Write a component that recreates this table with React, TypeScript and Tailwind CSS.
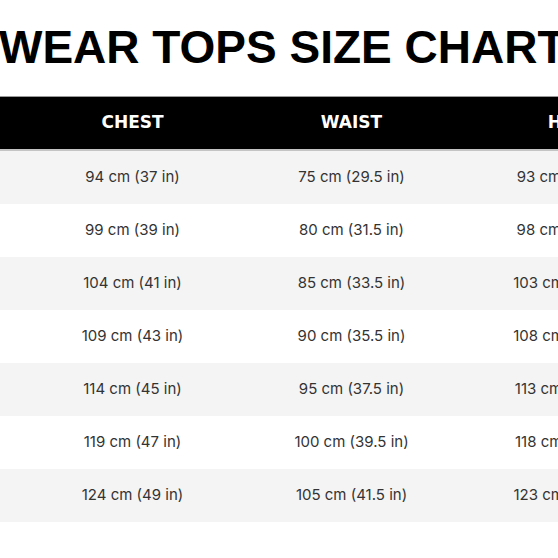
const rows = [
  { size: 'S', chest: '94 cm (37 in)', waist: '75 cm (29.5 in)', hips: '93 cm (36.5 in)' },
  { size: 'M', chest: '99 cm (39 in)', waist: '80 cm (31.5 in)', hips: '98 cm (38.5 in)' },
  { size: 'L', chest: '104 cm (41 in)', waist: '85 cm (33.5 in)', hips: '103 cm (40.5 in)' },
  { size: 'XL', chest: '109 cm (43 in)', waist: '90 cm (35.5 in)', hips: '108 cm (42.5 in)' },
  { size: '2XL', chest: '114 cm (45 in)', waist: '95 cm (37.5 in)', hips: '113 cm (44.5 in)' },
  { size: '3XL', chest: '119 cm (47 in)', waist: '100 cm (39.5 in)', hips: '118 cm (46.5 in)' },
  { size: '4XL', chest: '124 cm (49 in)', waist: '105 cm (41.5 in)', hips: '123 cm (48.5 in)' },
];

export default function App() {
  return (
    <div className="w-[558px] h-[558px] overflow-hidden bg-white font-['Inter',sans-serif]">
      {/* Title, cropped on both sides */}
      <h1 className="ml-[-1px] pt-[19px] h-[96px] whitespace-nowrap text-[46px] leading-[56px] font-bold text-black font-['Liberation_Sans',sans-serif]">
        WEAR TOPS SIZE CHART
      </h1>

      {/* Table, first column lies off-screen */}
      <div className="ml-[-196px] w-[876px]">
        <div className="grid grid-cols-4 h-[55px] items-center bg-black border-t border-[#9a9a9a] border-b-2 border-b-[#c4c4c4] text-white text-[17px] font-bold text-center font-['DejaVu_Sans',sans-serif]">
          <div>SIZE</div>
          <div>CHEST</div>
          <div>WAIST</div>
          <div>HIPS</div>
        </div>
        {rows.map((r, i) => (
          <div
            key={r.size}
            className={
              'grid grid-cols-4 h-[53px] items-center text-center text-[15px] text-[#333333] ' +
              (i % 2 === 0 ? 'bg-[#f4f4f4]' : 'bg-white')
            }
          >
            <div>{r.size}</div>
            <div>{r.chest}</div>
            <div>{r.waist}</div>
            <div>{r.hips}</div>
          </div>
        ))}
      </div>
    </div>
  );
}
